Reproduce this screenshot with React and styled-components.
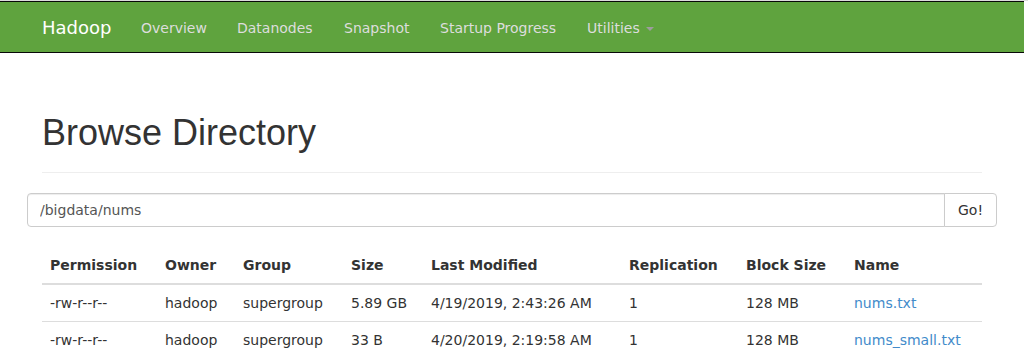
import React from "react";
import styled, { createGlobalStyle } from "styled-components";

const GlobalStyle = createGlobalStyle`
  html, body {
    margin: 0;
    padding: 0;
  }
  body {
    border-top: 1px solid #dcdcdc;
    padding-right: 4px;
    background: #fff;
    color: #333;
    font-family: "DejaVu Sans", sans-serif;
    font-size: 14px;
    line-height: 20px;
  }
`;

const files = [
  {
    permission: "-rw-r--r--",
    owner: "hadoop",
    group: "supergroup",
    size: "5.89 GB",
    modified: "4/19/2019, 2:43:26 AM",
    replication: "1",
    blockSize: "128 MB",
    name: "nums.txt",
  },
  {
    permission: "-rw-r--r--",
    owner: "hadoop",
    group: "supergroup",
    size: "33 B",
    modified: "4/20/2019, 2:19:58 AM",
    replication: "1",
    blockSize: "128 MB",
    name: "nums_small.txt",
  },
];

const columns = [
  { label: "Permission", width: 115 },
  { label: "Owner", width: 78 },
  { label: "Group", width: 108 },
  { label: "Size", width: 80 },
  { label: "Last Modified", width: 198 },
  { label: "Replication", width: 117 },
  { label: "Block Size", width: 108 },
  { label: "Name", width: 136 },
];

// widths measured off the original nav so the items line up
const navLinks = [
  { text: "Overview", width: 96 },
  { text: "Datanodes", width: 107 },
  { text: "Snapshot", width: 96 },
  { text: "Startup Progress", width: 147 },
];

const App = () => {
  return (
    <>
      <GlobalStyle />
      <Navbar>
        <NavContainer>
          <Brand href="#">Hadoop</Brand>
          <NavList>
            {navLinks.map(({ text, width }) => (
              <li key={text}>
                <NavLink href="#" $w={width}>
                  {text}
                </NavLink>
              </li>
            ))}
            <li>
              <NavLink href="#">
                Utilities <Caret />
              </NavLink>
            </li>
          </NavList>
        </NavContainer>
      </Navbar>
      <Container>
        <PageHeader>
          <h1>Browse Directory</h1>
        </PageHeader>
        <Row>
          <InputGroup>
            <PathInput type="text" defaultValue="/bigdata/nums" />
            <GoButton type="submit">Go!</GoButton>
          </InputGroup>
        </Row>
        <Table>
          <thead>
            <tr>
              {columns.map(({ label, width }) => (
                <Th key={label} $w={width}>
                  {label}
                </Th>
              ))}
            </tr>
          </thead>
          <tbody>
            {files.map((f) => (
              <tr key={f.name}>
                <Td>{f.permission}</Td>
                <Td>{f.owner}</Td>
                <Td>{f.group}</Td>
                <Td>{f.size}</Td>
                <Td>{f.modified}</Td>
                <Td>{f.replication}</Td>
                <Td>{f.blockSize}</Td>
                <Td>
                  <FileLink href="#">{f.name}</FileLink>
                </Td>
              </tr>
            ))}
          </tbody>
        </Table>
      </Container>
    </>
  );
};

const Navbar = styled.header`
  background: #5fa33e;
  border-top: 1px solid #080808;
  border-bottom: 1px solid #080808;
  min-height: 50px;
`;

const NavContainer = styled.div`
  width: 970px;
  margin: 0 auto;
  padding: 0 15px;
  box-sizing: border-box;
  display: flex;
  align-items: center;
`;

const Brand = styled.a`
  width: 99px;
  box-sizing: border-box;
  margin-left: -15px;
  padding: 16px 15px 14px;
  font-size: 18px;
  line-height: 20px;
  color: #fff;
  text-decoration: none;
`;

const NavList = styled.ul`
  display: flex;
  margin: 0;
  padding: 0;
  list-style: none;
`;

const NavLink = styled.a`
  display: block;
  box-sizing: border-box;
  ${({ $w }) => ($w ? `width: ${$w}px;` : "")}
  padding: 16px 15px 14px;
  line-height: 20px;
  white-space: nowrap;
  color: #ddd;
  text-decoration: none;
`;

const Caret = styled.span`
  display: inline-block;
  width: 0;
  height: 0;
  margin-left: 2px;
  vertical-align: middle;
  border-top: 4px solid #9d9d9d;
  border-left: 4px solid transparent;
  border-right: 4px solid transparent;
`;

const Container = styled.div`
  width: 970px;
  margin: 0 auto;
  padding: 0 15px;
  box-sizing: border-box;
`;

const PageHeader = styled.div`
  margin: 60px 0 20px;
  padding-bottom: 9px;
  border-bottom: 1px solid #eee;

  h1 {
    margin: 0 0 10px;
    font-family: "Liberation Sans", Arial, sans-serif;
    font-size: 36px;
    font-weight: 500;
    line-height: 40px;
    color: #333;
  }
`;

const Row = styled.div`
  margin: 0 -15px 20px;
`;

const InputGroup = styled.div`
  display: flex;
`;

const PathInput = styled.input`
  flex: 1;
  height: 34px;
  box-sizing: border-box;
  padding: 6px 12px;
  font-family: "DejaVu Sans", sans-serif;
  font-size: 14px;
  line-height: 20px;
  color: #555;
  border: 1px solid #ccc;
  border-radius: 4px 0 0 4px;
  box-shadow: inset 0 1px 1px rgba(0, 0, 0, 0.075);
  outline: none;
`;

const GoButton = styled.button`
  margin-left: -1px;
  width: 53px;
  height: 34px;
  padding: 6px 12px;
  font-family: "DejaVu Sans", sans-serif;
  font-size: 14px;
  line-height: 20px;
  color: #333;
  background: #fff;
  border: 1px solid #ccc;
  border-radius: 0 4px 4px 0;
  cursor: pointer;
`;

const Table = styled.table`
  width: 100%;
  table-layout: fixed;
  border-collapse: collapse;
  border-spacing: 0;
  margin-bottom: 20px;
`;

const Th = styled.th`
  box-sizing: border-box;
  width: ${({ $w }) => $w}px;
  padding: 8px;
  text-align: left;
  vertical-align: bottom;
  font-weight: bold;
  line-height: 20px;
  white-space: nowrap;
  border-bottom: 2px solid #ddd;
`;

const Td = styled.td`
  padding: 8px;
  line-height: 20px;
  vertical-align: top;
  white-space: nowrap;
  border-top: 1px solid #ddd;
`;

const FileLink = styled.a`
  color: #428bca;
  text-decoration: none;
`;

export default App;
